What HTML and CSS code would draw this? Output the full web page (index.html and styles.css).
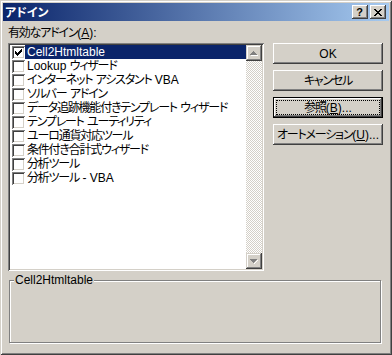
FILE: index.html
```html
<!DOCTYPE html>
<html lang="ja">
<head>
<meta charset="utf-8">
<title>アドイン</title>
<link rel="stylesheet" href="styles.css">
</head>
<body>
<div class="win">
  <div class="titlebar">
    <span class="title">アドイン</span>
    <div class="tbtns">
      <span class="tbtn help">?</span>
      <span class="tbtn close">
        <svg width="8" height="7" viewBox="0 0 8 7" shape-rendering="crispEdges"><path d="M0 0h2v1H0zM6 0h2v1H6zM1 1h2v1H1zM5 1h2v1H5zM2 2h4v1H2zM3 3h2v1H3zM2 4h4v1H2zM1 5h2v1H1zM5 5h2v1H5zM0 6h2v1H0zM6 6h2v1H6z" fill="#000"/></svg>
      </span>
    </div>
  </div>
  <div class="main">
    <div class="label"><span class="j">有効なアドイン</span>(<u>A</u>):</div>
    <div class="listbox">
      <div class="items">
        <div class="row"><span class="cb"><svg width="7" height="7" viewBox="0 0 7 7" shape-rendering="crispEdges"><path d="M0 2h1v3H0zM1 3h1v3H1zM2 4h1v3H2zM3 3h1v3H3zM4 2h1v3H4zM5 1h1v3H5zM6 0h1v3H6z" fill="#000"/></svg></span><span class="txt sel">Cell2Htmltable</span></div>
        <div class="row"><span class="cb"></span><span class="txt">Lookup <span class="j">ウィザード</span></span></div>
        <div class="row"><span class="cb"></span><span class="txt"><span class="j">インターネット</span> <span class="j">アシスタント</span> VBA</span></div>
        <div class="row"><span class="cb"></span><span class="txt"><span class="j">ソルバー</span> <span class="j">アドイン</span></span></div>
        <div class="row"><span class="cb"></span><span class="txt"><span class="j">データ追跡機能付きテンプレート</span> <span class="j">ウィザード</span></span></div>
        <div class="row"><span class="cb"></span><span class="txt"><span class="j">テンプレート</span> <span class="j">ユーティリティ</span></span></div>
        <div class="row"><span class="cb"></span><span class="txt"><span class="j">ユーロ通貨対応ツール</span></span></div>
        <div class="row"><span class="cb"></span><span class="txt"><span class="j">条件付き合計式ウィザード</span></span></div>
        <div class="row"><span class="cb"></span><span class="txt"><span class="j">分析ツール</span></span></div>
        <div class="row"><span class="cb"></span><span class="txt"><span class="j">分析ツール</span> - VBA</span></div>
      </div>
      <div class="scroll">
        <span class="sbtn"><svg width="8" height="5" viewBox="0 0 8 5" shape-rendering="crispEdges"><path d="M4 1h1v1H4zM5 2h1v1H5zM6 3h1v1H6zM1 4h7v1H1z" fill="#fff"/><path d="M3 0h1v1H3zM2 1h3v1H2zM1 2h5v1H1zM0 3h7v1H0z" fill="#808080"/></svg></span>
        <span class="track"></span>
        <span class="sbtn"><svg width="8" height="5" viewBox="0 0 8 5" shape-rendering="crispEdges"><path d="M7 1h1v1H7zM6 2h1v1H6zM5 3h1v1H5zM4 4h1v1H4z" fill="#fff"/><path d="M0 0h7v1H0zM1 1h5v1H1zM2 2h3v1H2zM3 3h1v1H3z" fill="#808080"/></svg></span>
      </div>
    </div>
    <div class="buttons">
      <span class="btn">OK</span>
      <span class="btn"><span class="j">キャンセル</span></span>
      <span class="btn focus"><span class="j">参照</span>(<u>B</u>)...</span>
      <span class="btn"><span class="j">オートメーション</span>(<u>U</u>)...</span>
    </div>
  </div>
  <div class="group">
    <span class="legend">Cell2Htmltable</span>
  </div>
</div>
</body>
</html>
```
FILE: styles.css
```css
* { box-sizing: border-box; }
html, body { margin: 0; }
body {
  background: #d4d0c8;
  font: 12px/14px "Liberation Sans", "Noto Sans CJK JP", sans-serif;
  font-feature-settings: "palt" 1;
  color: #000;
}
u { text-decoration: underline; text-underline-offset: 1px; }
.j { letter-spacing: -1.2px; }
.win {
  width: 392px;
  height: 355px;
  padding: 3px;
  display: flex;
  flex-direction: column;
  box-shadow: inset 1px 1px #d4d0c8, inset -1px -1px #404040, inset 2px 2px #fff, inset -2px -2px #808080;
}
.titlebar {
  height: 18px;
  flex: none;
  display: flex;
  align-items: center;
  padding: 0 3px 0 2px;
  background: linear-gradient(to right, #0a246a, #a6caf0);
}
.title {
  color: #fff;
  font-weight: bold;
  font-family: "Noto Sans CJK JP", sans-serif;
}
.tbtns { margin-left: auto; display: flex; gap: 2px; }
.tbtn {
  width: 16px;
  height: 14px;
  display: flex;
  align-items: center;
  justify-content: center;
  background: #d4d0c8;
  box-shadow: inset -1px -1px #404040, inset 1px 1px #fff, inset -2px -2px #808080;
}
.help { font: bold 11px/14px "Liberation Sans", sans-serif; padding-right: 1px; }
.close svg { display: block; }
.main {
  display: grid;
  grid-template-columns: 256px 110px;
  grid-template-rows: 14px 228px;
  column-gap: 9px;
  row-gap: 3px;
  padding: 5px 0 0 5px;
}
.label { grid-column: 1; grid-row: 1; }
.listbox {
  grid-column: 1;
  grid-row: 2;
  background: #fff;
  padding: 2px;
  display: flex;
  box-shadow: inset 1px 1px #808080, inset -1px -1px #fff, inset 2px 2px #404040, inset -2px -2px #d4d0c8;
}
.items { flex: 1; display: flex; flex-direction: column; min-width: 0; overflow: hidden; }
.row { height: 14px; display: flex; align-items: center; white-space: nowrap; }
.cb {
  width: 13px;
  height: 13px;
  margin-left: 2px;
  flex: none;
  background: #fff;
  display: flex;
  align-items: center;
  justify-content: center;
  box-shadow: inset 1px 1px #808080, inset -1px -1px #fff, inset 2px 2px #404040, inset -2px -2px #d4d0c8;
}
.txt { flex: 1; height: 14px; padding-left: 2px; }
.sel { background: #0a246a; color: #fff; }
.scroll { width: 16px; flex: none; display: flex; flex-direction: column; }
.track {
  flex: 1;
  background: repeating-conic-gradient(#d4d0c8 0 25%, #fff 0 50%) 0 0 / 2px 2px;
}
.sbtn {
  height: 16px;
  flex: none;
  display: flex;
  align-items: center;
  justify-content: center;
  background: #d4d0c8;
  box-shadow: inset -1px -1px #404040, inset 1px 1px #d4d0c8, inset -2px -2px #808080, inset 2px 2px #fff;
}
.buttons {
  grid-column: 2;
  grid-row: 2;
  display: flex;
  flex-direction: column;
  gap: 6px;
}
.btn {
  height: 21px;
  display: flex;
  align-items: center;
  justify-content: center;
  white-space: nowrap;
  background: #d4d0c8;
  box-shadow: inset -1px -1px #404040, inset 1px 1px #fff, inset -2px -2px #808080;
}
.btn.focus {
  border: 1px solid #000;
  outline: 1px dotted #000;
  outline-offset: -4px;
}
.group {
  position: relative;
  margin: 9px 0 0 6px;
  width: 372px;
  height: 63px;
  border: 1px solid #808080;
  box-shadow: inset 1px 1px #fff, 1px 1px #fff;
}
.legend {
  position: absolute;
  top: -8px;
  left: 4px;
  padding: 0 1px;
  background: #d4d0c8;
  line-height: 14px;
}
```
